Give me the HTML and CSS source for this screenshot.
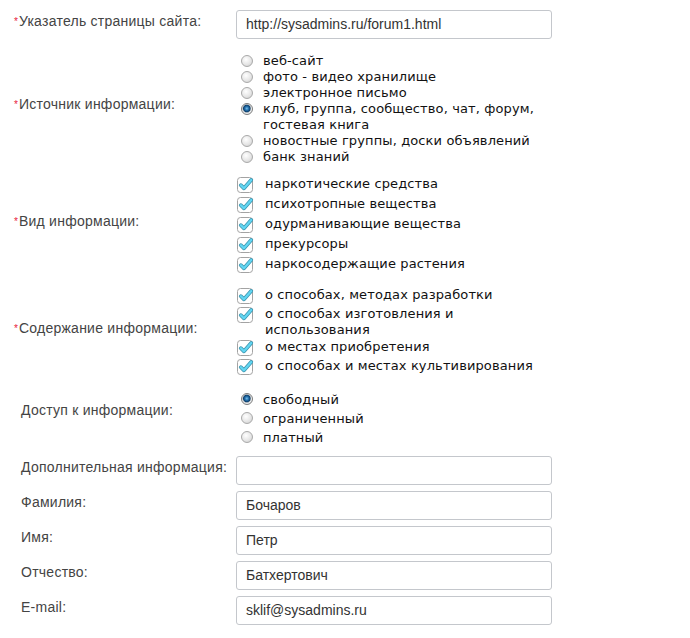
FILE: index.html
```html
<!DOCTYPE html>
<html lang="ru">
<head>
    <meta charset="UTF-8">
    <meta name="viewport" content="width=device-width, initial-scale=1.0">
    <title>Сообщить о ресурсе</title>
    <link rel="stylesheet" href="styles.css">
</head>
<body>
    <form class="report">
        <!-- Адрес страницы -->
        <div class="row">
            <div class="label"><span class="req">*</span>Указатель страницы сайта:</div>
            <div class="field"><div class="text-input">http://sysadmins.ru/forum1.html</div></div>
        </div>

        <!-- Источник -->
        <div class="row">
            <div class="label label-source"><span class="req">*</span>Источник информации:</div>
            <div class="field radios radios-source">
                <div class="opt"><span class="radio"></span><span>веб-сайт</span></div>
                <div class="opt"><span class="radio"></span><span>фото - видео хранилище</span></div>
                <div class="opt"><span class="radio"></span><span>электронное письмо</span></div>
                <div class="opt"><span class="radio on"></span><span>клуб, группа, сообщество, чат, форум, гостевая книга</span></div>
                <div class="opt"><span class="radio"></span><span>новостные группы, доски объявлений</span></div>
                <div class="opt"><span class="radio"></span><span>банк знаний</span></div>
            </div>
        </div>

        <!-- Вид -->
        <div class="row">
            <div class="label label-kind"><span class="req">*</span>Вид информации:</div>
            <div class="field checks checks-kind">
                <div class="chk"><span class="box"><svg viewBox="0 0 17 17" width="17" height="17"><rect x="0.5" y="1.5" width="15" height="15" rx="3" fill="#fff" stroke="#a3a3a3"/><path d="M3.8 9.2 L7 12.3 L14.2 4" fill="none" stroke="#3a93ad" stroke-width="3.8" stroke-linecap="round" stroke-linejoin="round"/><path d="M3.8 9.2 L7 12.3 L14.2 4" fill="none" stroke="#62d6f2" stroke-width="2.3" stroke-linecap="round" stroke-linejoin="round"/></svg></span><span>наркотические средства</span></div>
                <div class="chk"><span class="box"><svg viewBox="0 0 17 17" width="17" height="17"><rect x="0.5" y="1.5" width="15" height="15" rx="3" fill="#fff" stroke="#a3a3a3"/><path d="M3.8 9.2 L7 12.3 L14.2 4" fill="none" stroke="#3a93ad" stroke-width="3.8" stroke-linecap="round" stroke-linejoin="round"/><path d="M3.8 9.2 L7 12.3 L14.2 4" fill="none" stroke="#62d6f2" stroke-width="2.3" stroke-linecap="round" stroke-linejoin="round"/></svg></span><span>психотропные вещества</span></div>
                <div class="chk"><span class="box"><svg viewBox="0 0 17 17" width="17" height="17"><rect x="0.5" y="1.5" width="15" height="15" rx="3" fill="#fff" stroke="#a3a3a3"/><path d="M3.8 9.2 L7 12.3 L14.2 4" fill="none" stroke="#3a93ad" stroke-width="3.8" stroke-linecap="round" stroke-linejoin="round"/><path d="M3.8 9.2 L7 12.3 L14.2 4" fill="none" stroke="#62d6f2" stroke-width="2.3" stroke-linecap="round" stroke-linejoin="round"/></svg></span><span>одурманивающие вещества</span></div>
                <div class="chk"><span class="box"><svg viewBox="0 0 17 17" width="17" height="17"><rect x="0.5" y="1.5" width="15" height="15" rx="3" fill="#fff" stroke="#a3a3a3"/><path d="M3.8 9.2 L7 12.3 L14.2 4" fill="none" stroke="#3a93ad" stroke-width="3.8" stroke-linecap="round" stroke-linejoin="round"/><path d="M3.8 9.2 L7 12.3 L14.2 4" fill="none" stroke="#62d6f2" stroke-width="2.3" stroke-linecap="round" stroke-linejoin="round"/></svg></span><span>прекурсоры</span></div>
                <div class="chk"><span class="box"><svg viewBox="0 0 17 17" width="17" height="17"><rect x="0.5" y="1.5" width="15" height="15" rx="3" fill="#fff" stroke="#a3a3a3"/><path d="M3.8 9.2 L7 12.3 L14.2 4" fill="none" stroke="#3a93ad" stroke-width="3.8" stroke-linecap="round" stroke-linejoin="round"/><path d="M3.8 9.2 L7 12.3 L14.2 4" fill="none" stroke="#62d6f2" stroke-width="2.3" stroke-linecap="round" stroke-linejoin="round"/></svg></span><span>наркосодержащие растения</span></div>
            </div>
        </div>

        <!-- Содержание -->
        <div class="row">
            <div class="label label-content"><span class="req">*</span>Содержание информации:</div>
            <div class="field checks checks-content">
                <div class="chk"><span class="box"><svg viewBox="0 0 17 17" width="17" height="17"><rect x="0.5" y="1.5" width="15" height="15" rx="3" fill="#fff" stroke="#a3a3a3"/><path d="M3.8 9.2 L7 12.3 L14.2 4" fill="none" stroke="#3a93ad" stroke-width="3.8" stroke-linecap="round" stroke-linejoin="round"/><path d="M3.8 9.2 L7 12.3 L14.2 4" fill="none" stroke="#62d6f2" stroke-width="2.3" stroke-linecap="round" stroke-linejoin="round"/></svg></span><span>о способах, методах разработки</span></div>
                <div class="chk"><span class="box"><svg viewBox="0 0 17 17" width="17" height="17"><rect x="0.5" y="1.5" width="15" height="15" rx="3" fill="#fff" stroke="#a3a3a3"/><path d="M3.8 9.2 L7 12.3 L14.2 4" fill="none" stroke="#3a93ad" stroke-width="3.8" stroke-linecap="round" stroke-linejoin="round"/><path d="M3.8 9.2 L7 12.3 L14.2 4" fill="none" stroke="#62d6f2" stroke-width="2.3" stroke-linecap="round" stroke-linejoin="round"/></svg></span><span>о способах изготовления и использования</span></div>
                <div class="chk"><span class="box"><svg viewBox="0 0 17 17" width="17" height="17"><rect x="0.5" y="1.5" width="15" height="15" rx="3" fill="#fff" stroke="#a3a3a3"/><path d="M3.8 9.2 L7 12.3 L14.2 4" fill="none" stroke="#3a93ad" stroke-width="3.8" stroke-linecap="round" stroke-linejoin="round"/><path d="M3.8 9.2 L7 12.3 L14.2 4" fill="none" stroke="#62d6f2" stroke-width="2.3" stroke-linecap="round" stroke-linejoin="round"/></svg></span><span>о местах приобретения</span></div>
                <div class="chk"><span class="box"><svg viewBox="0 0 17 17" width="17" height="17"><rect x="0.5" y="1.5" width="15" height="15" rx="3" fill="#fff" stroke="#a3a3a3"/><path d="M3.8 9.2 L7 12.3 L14.2 4" fill="none" stroke="#3a93ad" stroke-width="3.8" stroke-linecap="round" stroke-linejoin="round"/><path d="M3.8 9.2 L7 12.3 L14.2 4" fill="none" stroke="#62d6f2" stroke-width="2.3" stroke-linecap="round" stroke-linejoin="round"/></svg></span><span>о способах и местах культивирования</span></div>
            </div>
        </div>

        <!-- Доступ -->
        <div class="row">
            <div class="label label-access">Доступ к информации:</div>
            <div class="field radios radios-access">
                <div class="opt"><span class="radio on"></span><span>свободный</span></div>
                <div class="opt"><span class="radio"></span><span>ограниченный</span></div>
                <div class="opt"><span class="radio"></span><span>платный</span></div>
            </div>
        </div>

        <!-- Контактные данные -->
        <div class="row">
            <div class="label">Дополнительная информация:</div>
            <div class="field"><div class="text-input"></div></div>
        </div>
        <div class="row">
            <div class="label">Фамилия:</div>
            <div class="field"><div class="text-input">Бочаров</div></div>
        </div>
        <div class="row">
            <div class="label">Имя:</div>
            <div class="field"><div class="text-input">Петр</div></div>
        </div>
        <div class="row">
            <div class="label">Отчество:</div>
            <div class="field"><div class="text-input">Батхертович</div></div>
        </div>
        <div class="row">
            <div class="label">E-mail:</div>
            <div class="field"><div class="text-input">sklif@sysadmins.ru</div></div>
        </div>
    </form>
</body>
</html>
```

FILE: styles.css
```css
body {
    font-family: "Liberation Sans", Arial, sans-serif;
    background-color: #fff;
    margin: 0;
    padding: 0;
}
.report {
    padding: 10px 0 0 14px;
}
.row {
    display: grid;
    grid-template-columns: 222px 316px;
    align-items: center;
    margin-bottom: 6px;
}
.label {
    font-size: 14px;
    letter-spacing: 0.25px;
    color: #444;
    padding: 0 0 7px 7px;
}
.label-source {
    padding-bottom: 5px;
}
.label-kind {
    padding-bottom: 11px;
}
.label-content {
    padding-bottom: 13px;
}
.label-access {
    padding-bottom: 21px;
}
/* звездочка обязательного поля */
.req {
    color: #e8203c;
    font-size: 10px;
    letter-spacing: 0;
    margin-left: -7px;
    margin-right: 1px;
    vertical-align: 1px;
}
.text-input {
    box-sizing: border-box;
    height: 29px;
    border: 1px solid #c4c7cc;
    border-radius: 3px;
    padding: 0 9px;
    font-size: 14px;
    line-height: 27px;
    color: #333;
}

/* списки с переключателями */
.radios,
.checks {
    font-family: "DejaVu Sans", Verdana, sans-serif;
    font-size: 13px;
    letter-spacing: 0.12px;
    color: #111;
}
.radios-source {
    padding: 8px 0 3px;
}
.radios-access {
    padding: 0 0 3px;
}
.checks-kind {
    padding: 1px 0 4px;
}
.checks-content {
    padding: 1px 0 8px;
}
.opt {
    display: flex;
    align-items: flex-start;
    line-height: 16px;
}
.radios-access .opt {
    line-height: 19px;
}
.radio {
    flex: none;
    box-sizing: border-box;
    width: 12px;
    height: 12px;
    margin: 2px 10px 0 5px;
    border: 1px solid #a9a9a9;
    border-radius: 50%;
    background: radial-gradient(circle at 40% 35%, #ffffff 0%, #e6e6e6 55%, #c9c9c9 100%);
}
.radios-access .radio {
    margin-top: 3px;
}
.radio.on {
    background: radial-gradient(circle at 48% 45%, #7cc0ec 0%, #2a78b4 22%, #0b3f6e 44%, #9aa6b0 52%, #eef0f2 62%, #cfcfcf 100%);
    border-color: #7d7d7d;
}
.chk {
    display: flex;
    align-items: flex-start;
    padding: 1px 0;
    line-height: 16px;
}
.checks-content .chk {
    padding-bottom: 0;
}
.box {
    flex: none;
    width: 17px;
    height: 17px;
    margin: 0 11px 1px 1px;
}
.box svg {
    display: block;
}
```
